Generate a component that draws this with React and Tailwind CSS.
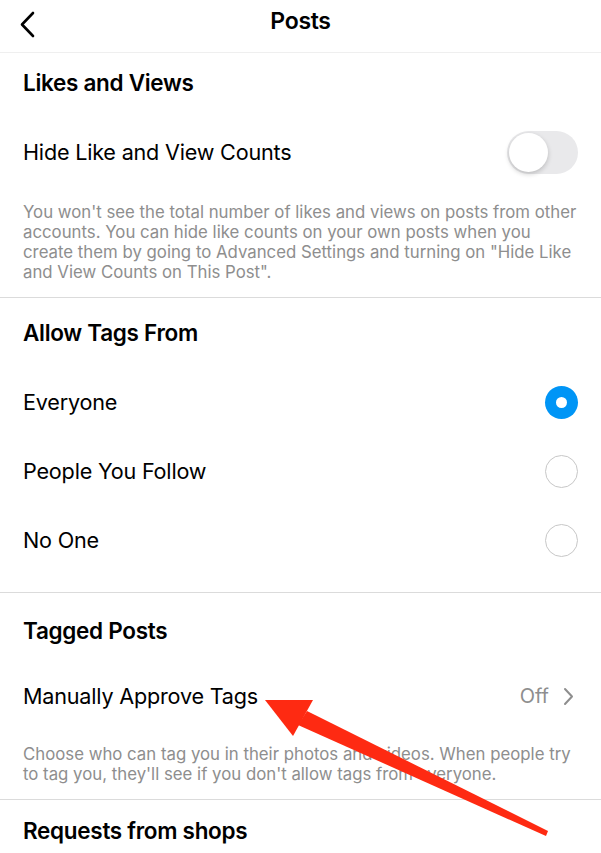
import React, { useState } from "react";

const font = { fontFamily: "Inter, 'Noto Sans', sans-serif" };

const Toggle = ({ on, onChange }) => (
  <button
    onClick={() => onChange(!on)}
    className={`relative w-[71px] h-[43px] rounded-full transition-colors ${on ? "bg-[#34c759]" : "bg-[#e9e9eb]"}`}
  >
    <span
      className={`absolute top-[2px] w-[39px] h-[39px] rounded-full bg-white shadow-[0_2px_5px_rgba(0,0,0,0.2)] transition-all ${
        on ? "left-[30px]" : "left-[2px]"
      }`}
    />
  </button>
);

const Radio = ({ checked }) =>
  checked ? (
    <span className="w-[33px] h-[33px] rounded-full bg-[#0095f6] flex items-center justify-center">
      <span className="w-[11px] h-[11px] rounded-full bg-white" />
    </span>
  ) : (
    <span className="w-[33px] h-[33px] rounded-full border-[1.5px] border-[#c7c7c7]" />
  );

const SectionTitle = ({ children, h }) => (
  <div className={`flex items-center ${h} text-[22.5px] font-semibold text-black tracking-[-0.3px]`}>{children}</div>
);

const Note = ({ children, className = "" }) => (
  <p className={`text-[16.8px] leading-[20px] text-[#8e8e8e] whitespace-nowrap ${className}`}>{children}</p>
);

export default function App() {
  const [hideCounts, setHideCounts] = useState(false);
  const [tagsFrom, setTagsFrom] = useState("everyone");

  const options = [
    { id: "everyone", label: "Everyone" },
    { id: "follow", label: "People You Follow" },
    { id: "none", label: "No One" },
  ];

  return (
    <div className="relative w-[601px] h-[853px] overflow-hidden bg-white text-black" style={font}>
      <header className="relative h-[53px] flex items-center justify-center border-b border-[#efefef]">
        <button className="absolute left-[14px] top-[6px] p-1">
          <svg width="22" height="30" viewBox="0 0 22 30" fill="none">
            <path d="M15 3 L4 14.5 L15 26" stroke="#000" strokeWidth="2.6" strokeLinecap="round" strokeLinejoin="round" />
          </svg>
        </button>
        <h1 className="text-[23px] font-semibold tracking-[-0.3px] -mt-[9px]">Posts</h1>
      </header>

      <section className="px-[23px] pb-[15px] border-b border-[#dbdbdb]">
        <SectionTitle h="h-[59px]">Likes and Views</SectionTitle>
        <div className="h-[80px] flex items-center justify-between">
          <span className="text-[21.6px] tracking-[-0.2px]">Hide Like and View Counts</span>
          <Toggle on={hideCounts} onChange={setHideCounts} />
        </div>
        <Note className="pt-[10px]">
          You won't see the total number of likes and views on posts from other
          <br />
          accounts. You can hide like counts on your own posts when you
          <br />
          create them by going to Advanced Settings and turning on "Hide Like
          <br />
          and View Counts on This Post".
        </Note>
      </section>

      <section className="px-[23px] pb-[17px] border-b border-[#dbdbdb]">
        <SectionTitle h="h-[70px]">Allow Tags From</SectionTitle>
        {options.map((o) => (
          <div
            key={o.id}
            onClick={() => setTagsFrom(o.id)}
            className="h-[69px] flex items-center justify-between cursor-pointer"
          >
            <span className="text-[21.6px] tracking-[-0.2px]">{o.label}</span>
            <Radio checked={tagsFrom === o.id} />
          </div>
        ))}
      </section>

      <section className="px-[23px] pb-[15px] border-b border-[#dbdbdb]">
        <SectionTitle h="h-[76px]">Tagged Posts</SectionTitle>
        <div className="h-[54px] flex items-center justify-between">
          <span className="text-[21.6px] tracking-[-0.2px]">Manually Approve Tags</span>
          <span className="flex items-center gap-[14px] pr-[4px]">
            <span className="text-[20px] text-[#8e8e8e]">Off</span>
            <svg width="11" height="19" viewBox="0 0 11 19" fill="none">
              <path d="M2 2 L9 9.5 L2 17" stroke="#8e8e8e" strokeWidth="2" strokeLinecap="round" strokeLinejoin="round" />
            </svg>
          </span>
        </div>
        <Note className="pt-[21px]">
          Choose who can tag you in their photos and videos. When people try
          <br />
          to tag you, they'll see if you don't allow tags from everyone.
        </Note>
      </section>

      <section className="px-[23px]">
        <SectionTitle h="h-[62px]">Requests from shops</SectionTitle>
      </section>

      {/* red callout arrow pointing at the tags row */}
      <svg className="absolute inset-0 pointer-events-none" width="601" height="853" viewBox="0 0 601 853">
        <polygon points="265,700 313,700 293,736" fill="#fe2a12" />
        <polygon points="298,725 307,711 548,831 546,836" fill="#fe2a12" />
      </svg>
    </div>
  );
}
